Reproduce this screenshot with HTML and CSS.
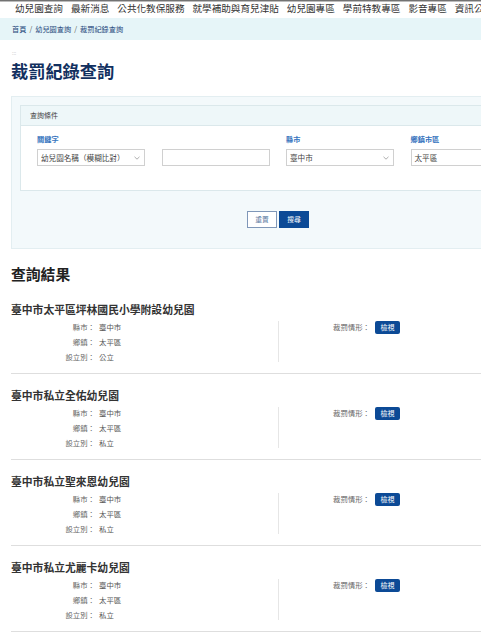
FILE: index.html
```html
<!DOCTYPE html>
<html lang="zh-Hant">
<head>
<meta charset="utf-8">
<title>裁罰紀錄查詢</title>
<link rel="stylesheet" href="styles.css">
</head>
<body>
<nav class="topnav">
  <a class="nav-item">幼兒園查詢</a>
  <a class="nav-item">最新消息</a>
  <a class="nav-item">公共化教保服務</a>
  <a class="nav-item">就學補助與育兒津貼</a>
  <a class="nav-item">幼兒園專區</a>
  <a class="nav-item">學前特教專區</a>
  <a class="nav-item">影音專區</a>
  <a class="nav-item">資訊公開</a>
</nav>
<div class="crumbs">
  <a class="crumb">首頁</a><span class="sep">/</span><a class="crumb">幼兒園查詢</a><span class="sep">/</span><span class="crumb">裁罰紀錄查詢</span>
</div>
<main class="page">
  <div class="accesskey">:::</div>
  <h1 class="page-title">裁罰紀錄查詢</h1>

  <section class="search-panel">
    <div class="card">
      <div class="card-head">查詢條件</div>
      <div class="card-body">
        <div class="field">
          <label class="field-label">關鍵字</label>
          <div class="control select"><span>幼兒園名稱（模糊比對）</span><svg class="chev" viewBox="0 0 6 4" width="6" height="4"><polyline points="0.5,0.8 3,3.2 5.5,0.8" fill="none" stroke="#999" stroke-width="0.8"/></svg></div>
        </div>
        <div class="field">
          <label class="field-label">&nbsp;</label>
          <div class="control"></div>
        </div>
        <div class="field">
          <label class="field-label">縣市</label>
          <div class="control select"><span>臺中市</span><svg class="chev" viewBox="0 0 6 4" width="6" height="4"><polyline points="0.5,0.8 3,3.2 5.5,0.8" fill="none" stroke="#999" stroke-width="0.8"/></svg></div>
        </div>
        <div class="field">
          <label class="field-label">鄉鎮市區</label>
          <div class="control"><span>太平區</span></div>
        </div>
      </div>
    </div>
    <div class="actions">
      <button class="btn btn-outline">重置</button>
      <button class="btn btn-primary">搜尋</button>
    </div>
  </section>

  <h2 class="results-title">查詢結果</h2>

  <ul class="results">
    <li class="result">
      <h3 class="result-name">臺中市太平區坪林國民小學附設幼兒園</h3>
      <div class="result-body">
        <dl class="info">
          <div class="info-row"><dt>縣市：</dt><dd>臺中市</dd></div>
          <div class="info-row"><dt>鄉鎮：</dt><dd>太平區</dd></div>
          <div class="info-row"><dt>設立別：</dt><dd>公立</dd></div>
        </dl>
        <div class="penalty"><span class="penalty-label">裁罰情形：</span><button class="btn-view">檢視</button></div>
      </div>
    </li>
    <li class="result">
      <h3 class="result-name">臺中市私立全佑幼兒園</h3>
      <div class="result-body">
        <dl class="info">
          <div class="info-row"><dt>縣市：</dt><dd>臺中市</dd></div>
          <div class="info-row"><dt>鄉鎮：</dt><dd>太平區</dd></div>
          <div class="info-row"><dt>設立別：</dt><dd>私立</dd></div>
        </dl>
        <div class="penalty"><span class="penalty-label">裁罰情形：</span><button class="btn-view">檢視</button></div>
      </div>
    </li>
    <li class="result">
      <h3 class="result-name">臺中市私立聖來恩幼兒園</h3>
      <div class="result-body">
        <dl class="info">
          <div class="info-row"><dt>縣市：</dt><dd>臺中市</dd></div>
          <div class="info-row"><dt>鄉鎮：</dt><dd>太平區</dd></div>
          <div class="info-row"><dt>設立別：</dt><dd>私立</dd></div>
        </dl>
        <div class="penalty"><span class="penalty-label">裁罰情形：</span><button class="btn-view">檢視</button></div>
      </div>
    </li>
    <li class="result">
      <h3 class="result-name">臺中市私立尤麗卡幼兒園</h3>
      <div class="result-body">
        <dl class="info">
          <div class="info-row"><dt>縣市：</dt><dd>臺中市</dd></div>
          <div class="info-row"><dt>鄉鎮：</dt><dd>太平區</dd></div>
          <div class="info-row"><dt>設立別：</dt><dd>私立</dd></div>
        </dl>
        <div class="penalty"><span class="penalty-label">裁罰情形：</span><button class="btn-view">檢視</button></div>
      </div>
    </li>
  </ul>
</main>
</body>
</html>
```

FILE: styles.css
```css
html {
  overflow: hidden;
  background: #fff;
}
body {
  margin: 0;
  width: 600px;
  font-family: "Noto Sans CJK TC", "Noto Sans", sans-serif;
  color: #333;
}

/* top navigation */
.topnav {
  height: 18px;
  display: flex;
  gap: 8px;
  padding-left: 15px;
  white-space: nowrap;
  font-size: 9.6px;
  line-height: 16px;
  color: #333;
  background: linear-gradient(#4a4a4a 0, #9a9a9a 1px, #fff 2.5px);
}
.nav-item {
  color: #333;
  text-decoration: none;
}

/* breadcrumb */
.crumbs {
  height: 22px;
  line-height: 22px;
  padding-left: 12px;
  background: #e6f5f8;
  font-size: 7.2px;
  color: #23467a;
  white-space: nowrap;
}
.crumb {
  color: #23467a;
  text-decoration: none;
}
.sep {
  color: #555;
  padding: 0 3px;
}

/* page */
.page {
  padding-left: 11px;
  width: 534px;
}
.accesskey {
  margin-top: 10px;
  height: 6px;
  line-height: 6px;
  font-size: 5px;
  color: #c8c8c8;
  padding-left: 1px;
}
.page-title {
  margin: 3.5px 0 0;
  font-size: 17.2px;
  line-height: 21px;
  font-weight: 700;
  color: #12305f;
}

/* search panel */
.search-panel {
  margin-top: 15.5px;
  background: #f3f9fb;
  border: 1px solid #e3eef1;
  padding: 8px 8px 20px;
}
.card {
  background: #fff;
  border: 1px solid #dbe8eb;
}
.card-head {
  height: 19px;
  line-height: 19px;
  padding-left: 9px;
  background: #eef7f9;
  border-bottom: 1px solid #dbe8eb;
  font-size: 7px;
  color: #444;
}
.card-body {
  display: grid;
  grid-template-columns: repeat(4, 108px);
  column-gap: 16.5px;
  padding: 8px 16px 24px;
}
.field {
  display: flex;
  flex-direction: column;
}
.field-label {
  height: 10px;
  line-height: 10px;
  font-size: 7.2px;
  font-weight: 700;
  color: #3472bd;
  margin-bottom: 5px;
}
.control {
  height: 17px;
  box-sizing: border-box;
  border: 1px solid #d0d0d0;
  background: #fff;
  display: flex;
  align-items: center;
  justify-content: space-between;
  padding: 0 4px 0 3px;
  font-size: 7.6px;
  color: #444;
}
.chev {
  flex: none;
}

.actions {
  margin-top: 20px;
  display: flex;
  justify-content: center;
  gap: 2px;
}
.btn {
  width: 30px;
  height: 17px;
  padding: 0;
  box-sizing: border-box;
  font-family: inherit;
  font-size: 6.8px;
  line-height: 15px;
  border: 1px solid #0c4a96;
  border-radius: 0;
}
.btn-outline {
  background: #fff;
  color: #5b7aa2;
  border-color: #7f97b8;
}
.btn-primary {
  background: #0c4a96;
  color: #fff;
}

/* results */
.results-title {
  margin: 16px 0 0;
  font-size: 14.8px;
  line-height: 18px;
  font-weight: 700;
  color: #222;
}
.results {
  list-style: none;
  margin: 5px 0 0;
  padding: 0;
}
.result {
  padding: 14px 0 9px;
  border-bottom: 1px solid #dedede;
}
.result-name {
  margin: 0 0 3px;
  font-size: 10.8px;
  line-height: 14px;
  font-weight: 700;
  color: #333;
}
.result-body {
  display: grid;
  grid-template-columns: 267px 1fr;
}
.info {
  margin: 0;
}
.info-row {
  display: flex;
  height: 15px;
  line-height: 15px;
  font-size: 7.4px;
}
.info-row dt {
  width: 84px;
  text-align: right;
  color: #666;
}
.info-row dd {
  margin: 0 0 0 4px;
  color: #555;
}
.penalty {
  border-left: 1px solid #e6e6e6;
  margin: 2px 0;
  display: flex;
  align-items: flex-start;
  height: 41px;
}
.penalty-label {
  width: 91px;
  text-align: right;
  font-size: 7.4px;
  line-height: 11px;
  color: #666;
  margin-top: 0;
}
.btn-view {
  margin-left: 5px;
  margin-top: -0.5px;
  width: 25px;
  height: 13.5px;
  padding: 0;
  border: 0;
  border-radius: 2px;
  background: #0c4a96;
  color: #fff;
  font-family: inherit;
  font-size: 7px;
  line-height: 13.5px;
}
```
